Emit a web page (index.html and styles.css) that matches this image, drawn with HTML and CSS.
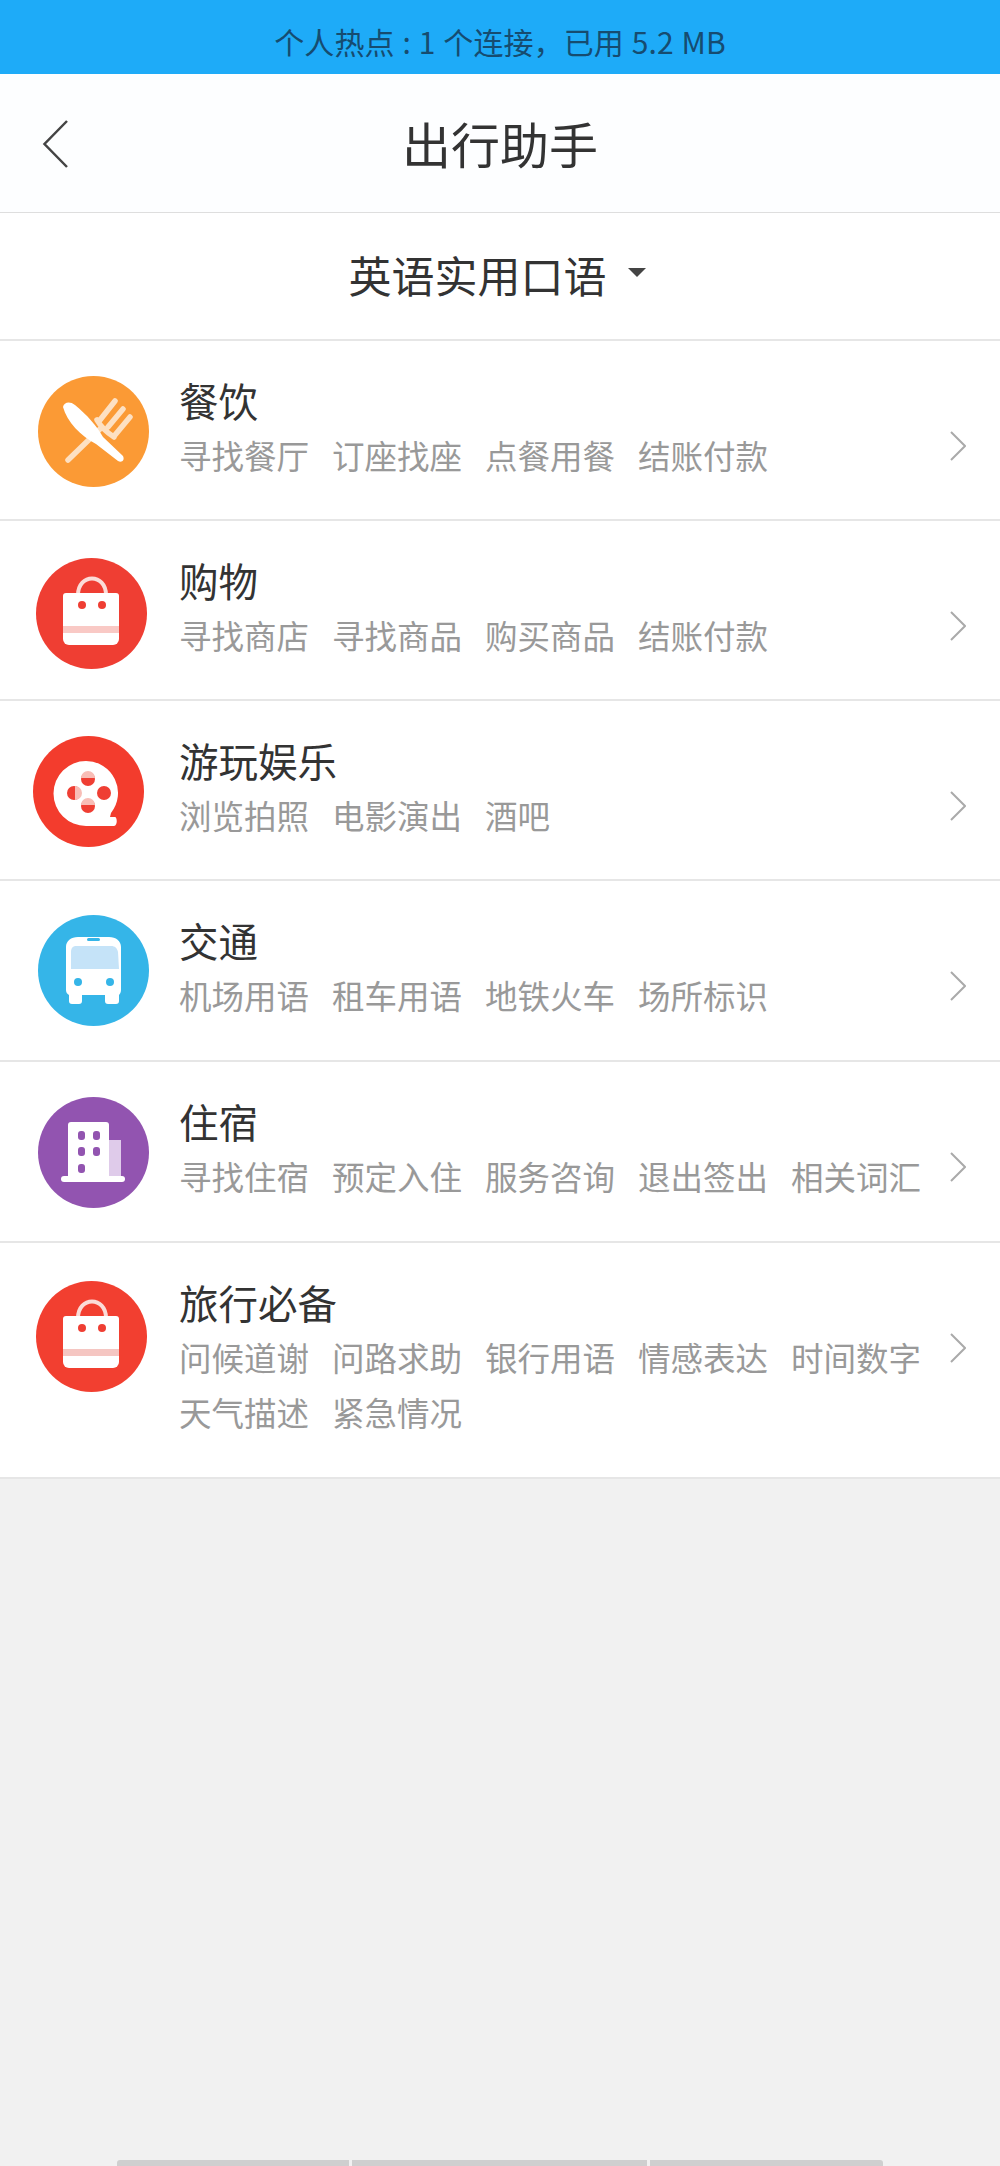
FILE: index.html
```html
<!DOCTYPE html>
<html lang="zh-CN">
<head>
<meta charset="utf-8">
<title>出行助手</title>
<link rel="stylesheet" href="styles.css">
</head>
<body>
<div class="page">
  <div class="hotspot">个人热点 : 1 个连接，已用 5.2 MB</div>
  <header class="nav">
    <svg class="back" viewBox="0 0 26 48"><path d="M24.500 1 2 24l22.500 23"/></svg>
    <h1 class="nav-title">出行助手</h1>
  </header>
  <div class="lang"><span class="lang-text">英语实用口语</span><span class="caret"></span></div>
  <ul class="list">
    <li class="row">
      <svg class="icon icon-food" viewBox="0 0 111 111">
        <circle cx="55.500" cy="55.500" r="55.500" fill="#fb9a35"/>
        <path class="fork" d="M30 84 62 53M59 44c4 7 9 12 17 17M62 44 77 25M70 51 85 33M77 59 92 41"/>
        <path fill="#fff" d="M25 31c1-5 7-6 12-2 12 10 22 21 28 32l20 19c2 4-1 7-5 5L58 68C43 60 29 46 25 31Z"/>
      </svg>
      <div class="body">
        <div class="title">餐饮</div>
        <div class="tags"><span>寻找餐厅</span><span>订座找座</span><span>点餐用餐</span><span>结账付款</span></div>
      </div>
      <svg class="chev" viewBox="0 0 16 30"><path d="M1 1l14 14L1 29"/></svg>
    </li>
    <li class="row">
      <svg class="icon icon-shop" viewBox="0 0 111 111">
        <circle cx="55.500" cy="55.500" r="55.500" fill="#ef3e33"/>
        <path class="handle" d="M42 37c0-22 28-22 28 0"/>
        <path fill="#fff" d="M30 35h50a3 3 0 0 1 3 3v43a6 6 0 0 1-6 6H33a6 6 0 0 1-6-6V38a3 3 0 0 1 3-3Z"/>
        <rect x="27" y="68" width="56" height="7" fill="#f9c9c5"/>
        <circle cx="46" cy="47" r="4" fill="#ef3e33"/><circle cx="66" cy="47" r="4" fill="#ef3e33"/>
      </svg>
      <div class="body">
        <div class="title">购物</div>
        <div class="tags"><span>寻找商店</span><span>寻找商品</span><span>购买商品</span><span>结账付款</span></div>
      </div>
      <svg class="chev" viewBox="0 0 16 30"><path d="M1 1l14 14L1 29"/></svg>
    </li>
    <li class="row">
      <svg class="icon icon-fun" viewBox="0 0 111 111">
        <circle cx="55.500" cy="55.500" r="55.500" fill="#f33c2d"/>
        <path fill="#fff" d="M53 25a32 32 0 0 1 25 52l-1 4h5c2 0 3 8-1 9H53a32.500 32.500 0 0 1 0-65Z"/>
        <circle cx="55" cy="43" r="7" fill="#ef3e33"/><path fill="#f8bdb6" d="M48 42a7 7 0 0 1 14 0Z"/>
        <circle cx="41" cy="57" r="7" fill="#ef3e33"/><path fill="#f8bdb6" d="M42 50a7 7 0 0 1 0 14Z"/>
        <circle cx="71" cy="57" r="7" fill="#ef3e33"/>
        <circle cx="55" cy="70" r="7" fill="#ef3e33"/><path fill="#f8bdb6" d="M48 69a7 7 0 0 1 14 0Z"/>
      </svg>
      <div class="body">
        <div class="title">游玩娱乐</div>
        <div class="tags"><span>浏览拍照</span><span>电影演出</span><span>酒吧</span></div>
      </div>
      <svg class="chev" viewBox="0 0 16 30"><path d="M1 1l14 14L1 29"/></svg>
    </li>
    <li class="row row-tall">
      <svg class="icon icon-bus" viewBox="0 0 111 111">
        <circle cx="55.500" cy="55.500" r="55.500" fill="#35b5e8"/>
        <path fill="#fff" d="M40 22h31c7 0 12 4 12 10v43c0 2-1 4-2 5v6a3 3 0 0 1-3 3h-8a3 3 0 0 1-3-3v-6H44v6a3 3 0 0 1-3 3h-7a3 3 0 0 1-3-3v-6c-2-1-3-3-3-5V32c0-6 5-10 12-10Z"/>
        <path fill="#c5e3f8" d="M38 31h35c4 0 6 2 7 6l1 17H33V37c0-4 2-6 5-6Z"/>
        <rect x="49" y="23" width="13" height="3" rx="1.500" fill="#35b5e8"/>
        <circle cx="40" cy="67" r="4" fill="#35b5e8"/><circle cx="72" cy="67" r="4" fill="#35b5e8"/>
      </svg>
      <div class="body">
        <div class="title">交通</div>
        <div class="tags"><span>机场用语</span><span>租车用语</span><span>地铁火车</span><span>场所标识</span></div>
      </div>
      <svg class="chev" viewBox="0 0 16 30"><path d="M1 1l14 14L1 29"/></svg>
    </li>
    <li class="row row-tall">
      <svg class="icon icon-stay" viewBox="0 0 111 111">
        <circle cx="55.500" cy="55.500" r="55.500" fill="#9254b0"/>
        <rect x="71" y="43" width="12" height="37" fill="#dfcbea"/>
        <path fill="#fff" d="M33 25h35a3 3 0 0 1 3 3v52H30V28a3 3 0 0 1 3-3Z"/>
        <rect x="23" y="79" width="64" height="6" rx="3" fill="#fff"/>
        <g fill="#9254b0">
          <rect x="40" y="34" width="7" height="9" rx="3"/><rect x="55" y="34" width="7" height="9" rx="3"/>
          <rect x="40" y="50" width="7" height="9" rx="3"/><rect x="55" y="50" width="7" height="9" rx="3"/>
          <rect x="40" y="67" width="7" height="9" rx="3"/>
        </g>
      </svg>
      <div class="body">
        <div class="title">住宿</div>
        <div class="tags"><span>寻找住宿</span><span>预定入住</span><span>服务咨询</span><span>退出签出</span><span>相关词汇</span></div>
      </div>
      <svg class="chev" viewBox="0 0 16 30"><path d="M1 1l14 14L1 29"/></svg>
    </li>
    <li class="row row-tall">
      <svg class="icon icon-trip" viewBox="0 0 111 111">
        <circle cx="55.500" cy="55.500" r="55.500" fill="#f23f30"/>
        <path class="handle" d="M42 37c0-22 28-22 28 0"/>
        <path fill="#fff" d="M30 35h50a3 3 0 0 1 3 3v43a6 6 0 0 1-6 6H33a6 6 0 0 1-6-6V38a3 3 0 0 1 3-3Z"/>
        <rect x="27" y="68" width="56" height="7" fill="#f5c6c2"/>
        <circle cx="46" cy="47" r="4" fill="#ef3e33"/><circle cx="66" cy="47" r="4" fill="#ef3e33"/>
      </svg>
      <div class="body">
        <div class="title">旅行必备</div>
        <div class="tags"><span>问候道谢</span><span>问路求助</span><span>银行用语</span><span>情感表达</span><span>时间数字</span><span>天气描述</span><span>紧急情况</span></div>
      </div>
      <svg class="chev" viewBox="0 0 16 30"><path d="M1 1l14 14L1 29"/></svg>
    </li>
  </ul>
  <div class="tabbar"><span class="tab tab-a"></span><span class="tab tab-b"></span><span class="tab tab-c"></span></div>
</div>
</body>
</html>
```
FILE: styles.css
```css
* { box-sizing: border-box; }
html, body { margin: 0; padding: 0; }
body { font-family: "Noto Sans CJK SC", "Noto Sans", sans-serif; background: #f1f1f1; }
.page { height: 2166px; display: flex; flex-direction: column; overflow: hidden; }

.hotspot { height: 74px; padding-top: 18px; background: #1eabf8; color: #164c70; font-size: 30px; line-height: 46px; text-align: center; white-space: nowrap; word-spacing: 1px; letter-spacing: 0.1px; }

.nav { height: 139px; background: #fdfeff; border-bottom: 1px solid #dedede; display: flex; align-items: center; justify-content: center; position: relative; }
.back { position: absolute; left: 42px; top: 46px; width: 27px; height: 48px; fill: none; stroke: #444; stroke-width: 2.500; }
.nav-title { margin: 0; font-size: 49px; font-weight: 400; color: #333; line-height: 60px; }

.lang { height: 128px; background: #fff; border-bottom: 2px solid #e6e6e6; display: flex; align-items: center; justify-content: center; gap: 21px; padding: 0 6px 4px 0; }
.lang-text { font-size: 43px; line-height: 56px; color: #333; }
.caret { width: 0; height: 0; border-left: 9px solid transparent; border-right: 9px solid transparent; border-top: 9px solid #444; margin-top: -3px; }

.list { list-style: none; margin: 0; padding: 0; }
.row { display: grid; grid-template-columns: 179px 1fr 50px; background: #fff; border-bottom: 2px solid #e6e6e6; padding: 34px 0 37px; align-items: start; }
.row-tall { padding-bottom: 38px; }
.icon { width: 111px; height: 111px; display: block; margin-bottom: -20px; }
.icon-food { margin-top: 1px; margin-left: 38px; }
.icon-shop { margin-top: 3px; margin-left: 36px; }
.icon-fun { margin-top: 1px; margin-left: 33px; }
.icon-bus { margin-top: 0; margin-left: 38px; }
.icon-stay { margin-top: 1px; margin-left: 38px; }
.icon-trip { margin-top: 4px; margin-left: 36px; }
.fork { fill: none; stroke: #fde0c2; stroke-width: 5.500; stroke-linecap: round; }
.handle { fill: none; stroke: #fbdcd8; stroke-width: 4; }

.body { min-width: 0; }
.title { font-size: 39.500px; line-height: 50px; color: #333; margin-bottom: 2px; }
.tags { display: flex; flex-wrap: wrap; column-gap: 23px; font-size: 32.500px; line-height: 55px; color: #999; }
.chev { width: 16px; height: 30px; margin-top: 56px; fill: none; stroke: #aaa; stroke-width: 2; }

.tabbar { margin-top: auto; height: 6px; padding: 0 117px; display: flex; gap: 3px; }
.tab { height: 6px; background: #cfcfcf; }
.tab-a { width: 233px; border-radius: 3px 0 0 0; }
.tab-b { width: 296px; }
.tab-c { width: 234px; border-radius: 0 3px 0 0; }
```
